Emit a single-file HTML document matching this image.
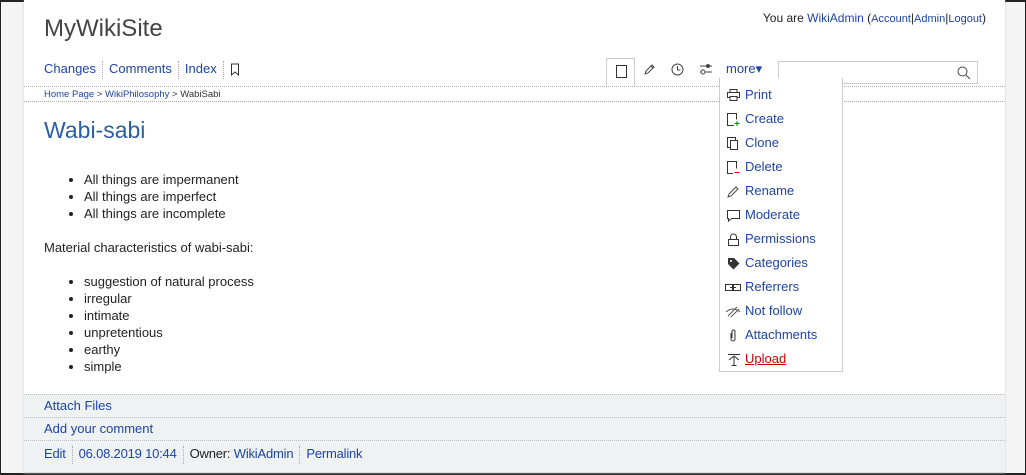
<!DOCTYPE html>
<html><head><style>
*{margin:0;padding:0;box-sizing:border-box}
body{width:1026px;height:475px;background:#f4f4f4;font-family:"Liberation Sans",sans-serif;font-size:13px;color:#222;position:relative;overflow:hidden;border:1px solid #222;border-top:2px solid #222;border-bottom:2px solid #222}
a{color:#1e44a4;text-decoration:none}
.abs{position:absolute}
#page{position:absolute;left:23px;top:-2px;width:981px;height:472px;background:#fff;box-shadow:0 1px 2px #ccc}
.dot{border-top:1px dotted #aaa}
ul{list-style:disc;padding-left:40px}
li{line-height:17px}
.foot{position:absolute;left:0;width:981px;background:#eff2f3;border-top:1px dotted #bbb;height:23px;line-height:22px;padding-left:20px}
.sep{border-left:1px dotted #aaa;height:18px;display:inline-block;vertical-align:middle;margin:0 6px}
.menu{position:absolute;left:718px;top:76px;width:124px;height:294px;background:#fff;border:1px solid #ccc;border-top:none;padding-top:5px}
.menu div{height:24px;line-height:24px;padding-left:25px;position:relative;font-size:13px}
.menu svg{position:absolute;left:7px;top:6px}
</style></head><body>
<div id="page">
 <div class="abs" style="left:20px;top:15px;font-size:24px;color:#444">MyWikiSite</div>
 <div class="abs" style="right:19px;top:11px;font-size:12px">You are <a>WikiAdmin</a> (<a style="font-size:11px">Account</a>|<a style="font-size:11px">Admin</a>|<a style="font-size:11px">Logout</a>)</div>
 <div class="abs" style="left:20px;top:59px;height:20px;line-height:20px;font-size:13px"><a>Changes</a><span class="sep"></span><a>Comments</a><span class="sep"></span><a>Index</a><span class="sep"></span><svg width="10" height="13" viewBox="0 0 10 13" style="vertical-align:middle"><path d="M1.5 1h7v11l-3.5-3-3.5 3z" fill="none" stroke="#333"/></svg></div>
 <div class="abs" style="left:582px;top:58px;width:29px;height:28px;border:1px solid #ccc;border-bottom:none;background:#fff"><svg class="abs" style="left:9px;top:6px" width="11" height="13"><rect x=".5" y=".5" width="10" height="12" fill="none" stroke="#333"/></svg></div>
 <svg class="abs" style="left:619px;top:63px" width="13" height="13"><path d="M2 11l1-3 6-6 2 2-6 6z" fill="none" stroke="#444"/><path d="M8 3l2 2" stroke="#444"/></svg>
 <svg class="abs" style="left:647px;top:63px" width="13" height="13"><circle cx="6.5" cy="6.5" r="5.5" fill="none" stroke="#444"/><path d="M6.5 3v4h3" fill="none" stroke="#444"/></svg>
 <svg class="abs" style="left:675px;top:62px" width="14" height="14"><path d="M1 4h12M1 10h12" stroke="#444"/><circle cx="9" cy="4" r="2" fill="#444"/><circle cx="4" cy="10" r="2" fill="#fff" stroke="#444"/></svg>
 <div class="abs" style="left:702px;top:61px;font-size:13px"><a>more▾</a></div>
 <div class="abs" style="left:754px;top:61px;width:200px;height:23px;border:1px solid #ccc"><svg class="abs" style="right:6px;top:4px" width="14" height="14"><circle cx="5.5" cy="5.5" r="4.5" fill="none" stroke="#444"/><path d="M9 9l4 4" stroke="#444"/></svg></div>
 <div class="abs dot" style="left:0;top:86px;width:981px"></div>
 <div class="abs" style="left:20px;top:89px;font-size:9.5px;color:#333"><a>Home Page</a> &gt; <a>WikiPhilosophy</a> &gt; WabiSabi</div>
 <div class="abs dot" style="left:0;top:101px;width:981px"></div>
 <div class="abs" style="left:20px;top:117px;font-size:23px;color:#2a5fa0">Wabi-sabi</div>
 <div class="abs" style="left:20px;top:171px;width:600px">
  <ul><li>All things are impermanent</li><li>All things are imperfect</li><li>All things are incomplete</li></ul>
  <p style="margin:17px 0 17px;line-height:17px">Material characteristics of wabi-sabi:</p>
  <ul><li>suggestion of natural process</li><li>irregular</li><li>intimate</li><li>unpretentious</li><li>earthy</li><li>simple</li></ul>
 </div>
 <div class="foot" style="top:394px"><a>Attach Files</a></div>
 <div class="foot" style="top:417px"><a>Add your comment</a></div>
 <div class="foot" style="top:440px;height:32px;line-height:26px;letter-spacing:-0.2px"><a>Edit</a><span class="sep"></span><a>06.08.2019 10:44</a><span class="sep"></span>Owner: <a>WikiAdmin</a><span class="sep"></span><a>Permalink</a></div>
</div>
<div class="menu">
 <div><svg width="13" height="12"><rect x="3" y=".5" width="7" height="3" fill="none" stroke="#333"/><rect x=".5" y="3.5" width="12" height="5" fill="none" stroke="#333"/><rect x="3" y="7.5" width="7" height="4" fill="#fff" stroke="#333"/></svg><a>Print</a></div>
 <div><svg width="13" height="13"><path d="M7 12.5H.5V.5h9v6" fill="none" stroke="#333"/><path d="M10 8v5M7.5 10.5h5" stroke="#080"/></svg><a>Create</a></div>
 <div><svg width="13" height="13"><rect x=".5" y=".5" width="8" height="10" fill="none" stroke="#333"/><rect x="3.5" y="3.5" width="7" height="9" fill="#fff" stroke="#333"/></svg><a>Clone</a></div>
 <div><svg width="13" height="13"><path d="M6 12.5H.5V.5h9v7" fill="none" stroke="#333"/><path d="M7.5 11.5h5" stroke="#c00"/></svg><a>Delete</a></div>
 <div><svg width="13" height="13"><path d="M1 12l1-3 7-7 2 2-7 7z" fill="none" stroke="#444"/></svg><a>Rename</a></div>
 <div><svg width="13" height="13"><path d="M.5 1.5h12v8h-8l-3 2.5v-2.5h-1z" fill="none" stroke="#333"/></svg><a>Moderate</a></div>
 <div><svg width="13" height="13"><path d="M3.5 6V4a3 3 0 0 1 6 0v2" fill="none" stroke="#333"/><rect x="1.5" y="6.5" width="10" height="6" fill="none" stroke="#333"/></svg><a>Permissions</a></div>
 <div><svg width="13" height="13"><path d="M1 1h6l5.5 5.5-6 6L1 7z" fill="#333"/><circle cx="4" cy="4" r="1" fill="#fff"/></svg><a>Categories</a></div>
 <div><svg width="16" height="13" style="left:5px"><rect x=".5" y="3.5" width="7" height="6" fill="none" stroke="#333"/><rect x="8.5" y="3.5" width="7" height="6" fill="none" stroke="#333"/><path d="M5 6.5h6" stroke="#333"/></svg><a>Referrers</a></div>
 <div><svg width="16" height="13" style="left:5px"><path d="M1 7q7-6 14 0M3 11l9-9M6 12l8-8" fill="none" stroke="#555"/></svg><a>Not follow</a></div>
 <div><svg width="13" height="13"><path d="M4 4v6a2 2 0 0 0 4 0V2.5a1.5 1.5 0 0 0-3 0V9" fill="none" stroke="#333"/></svg><a>Attachments</a></div>
 <div><svg width="14" height="13"><path d="M1 1.5h12M2 7l5-4 5 4M7 4v8M4.5 12.5h5" fill="none" stroke="#333"/></svg><a style="color:#c00;text-decoration:underline">Upload</a></div>
</div>
</body></html>
